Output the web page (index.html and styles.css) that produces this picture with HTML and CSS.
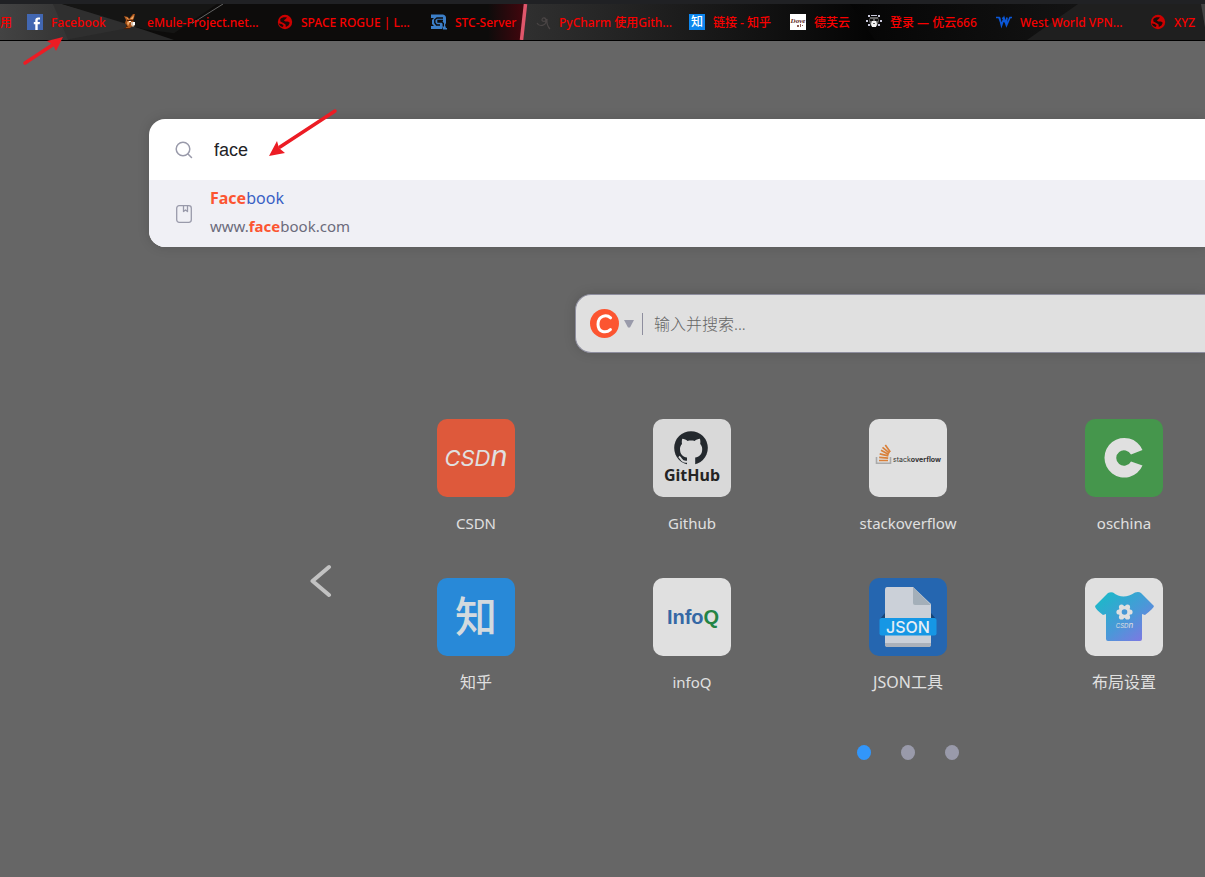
FILE: index.html
```html
<!DOCTYPE html>
<html lang="zh-CN">
<head>
<meta charset="utf-8">
<meta name="viewport" content="width=device-width, initial-scale=1">
<title>New Tab</title>
<link rel="stylesheet" href="styles.css">
</head>
<body>
<svg class="defs" aria-hidden="true">
  <symbol id="globe" viewBox="0 0 16 16">
    <circle cx="8" cy="8" r="7.200" fill="#cc0000"/>
    <path d="M3.200 5.200C5 3 8 2.800 10 3.600L8.600 5 6.800 6.400 8.400 7.600 11 7.400 12.800 8.800 11.400 11.400 8.800 13 8.600 10.600 6.400 9 3.400 7.600zM1.800 9.400l3 .6 1.800 1.600-.8 1.400-1.600-.4C3 11.800 2.200 10.800 1.800 9.400z" fill="#1a0b0a"/>
  </symbol>
</svg>

<nav class="bookmarks" aria-label="书签">
  <svg class="bookmarks-art" viewBox="0 0 1205 37" preserveAspectRatio="none" aria-hidden="true">
    <defs>
      <linearGradient id="left" x1="0" x2="1"><stop offset="0" stop-color="#434343"/><stop offset="1" stop-color="#343434"/></linearGradient>
      <linearGradient id="glow" x1="0" x2="1"><stop offset="0" stop-color="#42060d" stop-opacity="0"/><stop offset="1" stop-color="#42060d"/></linearGradient>
      <linearGradient id="mid" x1="0" x2="1"><stop offset="0" stop-color="#303030"/><stop offset="1" stop-color="#030303"/></linearGradient>
      <linearGradient id="right" x1="0" x2="1"><stop offset="0" stop-color="#050505"/><stop offset="1" stop-color="#1b1b1b"/></linearGradient>
    </defs>
    <path d="M0 0h1205v37H0z" fill="#0d0c0b"/>
    <path d="M50 0h12l80 26 32 11H50z" fill="#292929"/>
    <path d="M53 0h9l80 22-77 15z" fill="#2f2f2f"/>
    <path d="M0 0h53l15 37H0z" fill="url(#left)"/>
    <path d="M62 0h155l-43 30-30-4z" fill="#151514"/>
    <path d="m192 20 31-20" stroke="#666"/>
    <path d="M488 0h36l-4 37h-32z" fill="url(#glow)"/>
    <path d="M524 0h356v37H520z" fill="url(#mid)"/>
    <path d="M850 0h355v37H875z" fill="url(#right)"/>
    <path d="M1078 0h127v37h-178z" fill="#1f1f1f"/>
    <path d="M1201 0h4v24z" fill="#444"/>
    <path d="M525.500 0 521.500 37" stroke="#e0566b" stroke-width="3.500"/>
  </svg>
  <ul class="bookmark-list">
    <li><a class="bookmark" href="#"><span class="bookmark-name">用</span></a></li>
    <li><a class="bookmark" href="#">
      <svg class="favicon" viewBox="0 0 16 16" aria-hidden="true"><path d="M0 0h16v16H0z" fill="#4267b2"/><path d="M8.300 16V10.200H6.800V8h1.500V6.200C8.300 4.200 9.400 3.400 11.200 3.400h1.800v2.100h-1.300c-.7 0-1 .3-1 1V8h2.300l-.3 2.200h-2V16z" fill="#fff"/></svg>
      <span class="bookmark-name">Facebook</span></a></li>
    <li><a class="bookmark" href="#">
      <svg class="favicon" viewBox="0 0 16 16" aria-hidden="true"><path d="M1 2 5 3 6 5 10 0h2l-1 4-1 2 1 3-1 3-5 3H2l2-3-2-3 1-3z" fill="#a9541a"/><path d="m2 3 3 1 1 2zM7 5l4-4-1 4zM5 7l2 1-2 4-1-3z" fill="#f0a765"/><path d="M4 6h6v1H4zM1 14h6v1H1zM3 10l2 3H3z" fill="#4a2008"/><path d="M8 8h4v3l-2 2-2-2z" fill="#d8c0aa"/><path d="M10 8h2v3h-2zM6 7h2v1H6z" fill="#fff"/></svg>
      <span class="bookmark-name">eMule-Project.net...</span></a></li>
    <li><a class="bookmark" href="#"><svg class="favicon" aria-hidden="true"><use href="#globe"/></svg><span class="bookmark-name">SPACE ROGUE | L...</span></a></li>
    <li><a class="bookmark" href="#">
      <svg class="favicon" viewBox="0 0 16 16" fill="none" aria-hidden="true"><path d="M0 .5h12Q15 1 15 4v5l-1 2 1 3h1v1.500h-4l-1-3v2.500H0v-3h3L1 10V6l2-2H0z" fill="#3c7fc8"/><path d="M12 4H6L3.800 5.800v3L5.500 11H9M12 6.500H7V8h4l1.300 1.500v3" stroke="#0d0c0b" stroke-width="1.400"/></svg>
      <span class="bookmark-name">STC-Server</span></a></li>
    <li><a class="bookmark" href="#">
      <svg class="favicon" viewBox="0 0 16 16" fill="none" aria-hidden="true"><path d="M2 9c2 4 9 3 9-2 0-4-4-4-4-1 0 2 4 2 5-1 0 3-1 6 3 10" stroke="#4a4545" stroke-width="1.200"/></svg>
      <span class="bookmark-name">PyCharm 使用Gith...</span></a></li>
    <li><a class="bookmark" href="#">
      <svg class="favicon" viewBox="0 0 16 16" aria-hidden="true"><path d="M0 0h16v16H0z" fill="#0d86ed"/><text class="zhi zhi-small" x="8" y="12">知</text></svg>
      <span class="bookmark-name">链接 - 知乎</span></a></li>
    <li><a class="bookmark" href="#">
      <svg class="favicon" viewBox="0 0 16 16" aria-hidden="true"><path d="M0 0h16v16H0z" fill="#fff"/><text class="dove" x="8" y="9">Dove</text><path d="M7 11h2v2H7zM10 10h1v3h-1zM12 11h1v1h-1z" fill="#8b5a50"/></svg>
      <span class="bookmark-name">德芙云</span></a></li>
    <li><a class="bookmark" href="#">
      <svg class="favicon" viewBox="0 0 16 16" aria-hidden="true"><path d="M2 1h2v2H2zM12 1h2v2h-2zM5 1h6v1H5zM0 6h2v2H0zM14 6h2v2h-2zM2 10h2v2H2zM12 10h2v2h-2z" fill="#c9c9dc"/><path d="M4 3h8l1 4-2 5H5L3 7z" fill="#666"/><path d="M4 5h3v2H4zM9 5h3v2H9z" fill="#111"/><path d="M6 7h4l1 3-1 3H6l-1-3z" fill="#f4f4f4"/><path d="M7 9h2v1H7z" fill="#666"/></svg>
      <span class="bookmark-name">登录 — 优云666</span></a></li>
    <li><a class="bookmark" href="#">
      <svg class="favicon" viewBox="0 0 16 16" fill="none" aria-hidden="true"><path d="M0 3.500h3l2.500 7M3.500 3.500l2 8L8 4l2.500 7.500L14 3.500h2M6.500 3.500l3.500 6M11 3.500l-1 6" stroke="#0b57d8" stroke-width="1.700"/></svg>
      <span class="bookmark-name">West World VPN...</span></a></li>
    <li><a class="bookmark" href="#"><svg class="favicon" aria-hidden="true"><use href="#globe"/></svg><span class="bookmark-name">XYZ</span></a></li>
  </ul>
</nav>

<main class="page">
  <form class="finder" role="search">
    <div class="finder-row">
      <label class="row-icon" for="finder-input" aria-label="查找书签">
        <svg width="18" height="18" viewBox="0 0 18 18" fill="none" stroke="#999aaa" stroke-width="1.500" stroke-linecap="round"><circle cx="8" cy="8" r="6.800"/><path d="m13 13 3.500 3.500"/></svg>
      </label>
      <input class="finder-input" id="finder-input" type="text" value="face" autocomplete="off">
    </div>
    <a class="suggestion" href="#">
      <span class="row-icon"><svg width="18" height="20" viewBox="0 0 18 20" fill="none" stroke="#999aaa" stroke-width="1.300" stroke-linejoin="round" aria-hidden="true"><rect x="1.700" y="1.700" width="14.600" height="16.600" rx="2.500"/><path d="M8.500 2v5.500l2-1.500 2 1.500V2"/></svg></span>
      <span class="suggestion-text">
        <span class="suggestion-title"><b>Face</b>book</span>
        <span class="suggestion-url">www.<b>face</b>book.com</span>
      </span>
    </a>
  </form>

  <form class="search">
    <button class="engine" type="button" aria-label="选择搜索引擎">
      <svg width="30" height="30" viewBox="0 0 30 30" aria-hidden="true"><circle cx="14.500" cy="14.500" r="14.500" fill="#fc5531"/><path d="M20.600 8.800C16.500 5 8 6.600 8 15.200 8 23.500 16 24.500 20.400 20.600" fill="none" stroke="#fff" stroke-width="3" stroke-linecap="round"/></svg>
      <svg width="10" height="8" viewBox="0 0 10 8" aria-hidden="true"><path d="M0 0h10L6 7.500H4z" fill="#999aaa"/></svg>
    </button>
    <input class="search-input" type="text" placeholder="输入并搜索..." aria-label="输入并搜索">
  </form>

  <section class="launcher">
    <button class="prev" type="button" aria-label="上一页">
      <svg width="22" height="34" viewBox="0 0 22 34" fill="none" aria-hidden="true"><path d="M19 3 2.500 17 19 31" stroke="#c2c2c2" stroke-width="4" stroke-linecap="round" stroke-linejoin="round"/></svg>
    </button>
    <div class="launcher-body">
      <div class="tiles">
        <a class="tile" href="#">
          <svg class="logo logo-csdn" viewBox="0 0 78 78" aria-hidden="true"><text class="csdn" x="39" y="47">CSD<tspan font-size="29">n</tspan></text></svg>
          <span>CSDN</span></a>
        <a class="tile" href="#">
          <svg class="logo logo-github" viewBox="0 0 78 78" aria-hidden="true"><circle cx="38" cy="29" r="16.800" fill="#24292e"/><path d="M34 46V38.500c-4-.7-7-2.800-7-8.500 0-2 .8-3.700 2-5-.3-1.500-.3-3.400.3-5.200 2 0 3.800 1 5.200 2.100 2.200-.6 5-.6 7.200 0 1.400-1.100 3.200-2.100 5.200-2.100.6 1.800.6 3.700.3 5.200 1.200 1.300 2 3 2 5 0 5.700-3 7.800-7 8.500V46z" fill="#d9d9d9"/><path d="M35 42.500c-4 1-5.800-.3-7-2.600-.7-1.200-1.500-2-2.200-2.300" fill="none" stroke="#d9d9d9" stroke-width="2"/><text class="github" x="39" y="62">GitHub</text></svg>
          <span>Github</span></a>
        <a class="tile" href="#">
          <svg class="logo logo-plain" viewBox="0 0 78 78" fill="none" aria-hidden="true"><path d="M7.500 38v6.200h14V38" stroke="#aaa" stroke-width="1.600"/><g stroke="#d9803a" stroke-width="1.700"><path d="M10 41.500h9M10.200 38.300l9 .8M10.700 34.800l8.700 2M12 31.200l7.800 4.200M13.500 28.300l7 5.800M16.300 26l5 7"/></g><text class="stack" x="24" y="43">stack<tspan font-weight="700">overflow</tspan></text></svg>
          <span>stackoverflow</span></a>
        <a class="tile" href="#">
          <svg class="logo logo-oschina" viewBox="0 0 78 78" aria-hidden="true"><path d="M57.500 31A19.800 19.800 0 1 0 57.500 46.500L46 42.500A7.800 7.800 0 1 1 46 35.500z" fill="#e0e0e0"/></svg>
          <span>oschina</span></a>
        <a class="tile tile-cjk second-row" href="#">
          <svg class="logo logo-zhihu" viewBox="0 0 78 78" aria-hidden="true"><text class="zhi zhi-large" x="39" y="54">知</text></svg>
          <span>知乎</span></a>
        <a class="tile" href="#">
          <svg class="logo logo-plain" viewBox="0 0 78 78" aria-hidden="true"><text class="infoq" x="40" y="46">Info<tspan fill="#238444">Q</tspan></text></svg>
          <span>infoQ</span></a>
        <a class="tile tile-cjk" href="#">
          <svg class="logo logo-json" viewBox="0 0 78 78" aria-hidden="true"><path d="m16 35-5 6h56l-5-6z" fill="#174576"/><path d="M18 9h26l18 17v40q0 3-3 3H19q-3 0-3-3V12q0-3 2-3z" fill="#cbd0d8"/><path d="M44 9v16q0 2 2 2h16z" fill="#a4afb9"/><path d="M16 65h46v2q0 2-3 2H19q-3 0-3-2z" fill="#abb1ba"/><rect x="10.500" y="40" width="57" height="17.500" rx="2" fill="#1697e5"/><text class="json" x="39" y="54.500">JSON</text></svg>
          <span>JSON工具</span></a>
        <a class="tile tile-cjk" href="#">
          <svg class="logo logo-plain" viewBox="0 0 78 78" aria-hidden="true"><defs><linearGradient id="shirt" x1="0" y1="0" x2="1" y2="1"><stop offset=".15" stop-color="#22b4cb"/><stop offset=".55" stop-color="#4a98d8"/><stop offset=".9" stop-color="#7d78e2"/></linearGradient></defs><path d="M23 15q2-1 5-.5 10 8 22 0 4-1 6 .5l13 13q0 2-9 9l-3-1v25q0 2-2 2H23q-2 0-2-2V36l-3 1Q10 31 10 28z" fill="url(#shirt)"/><g fill="#e0e0e0"><circle cx="39.500" cy="34" r="6"/><circle cx="36.500" cy="29" r="2.600"/><circle cx="42.500" cy="29" r="2.600"/><circle cx="34" cy="34" r="2.600"/><circle cx="45" cy="34" r="2.600"/><circle cx="36.500" cy="39" r="2.600"/><circle cx="42.500" cy="39" r="2.600"/></g><circle cx="39.500" cy="34" r="2.800" fill="#4897d5"/><text class="shirt-text" x="39.500" y="50">CSD<tspan font-size="8">n</tspan></text></svg>
          <span>布局设置</span></a>
      </div>
      <div class="pager">
        <button class="dot is-active" type="button" aria-label="第 1 页"></button>
        <button class="dot" type="button" aria-label="第 2 页"></button>
        <button class="dot" type="button" aria-label="第 3 页"></button>
      </div>
    </div>
  </section>
</main>

<svg class="pointer pointer-bookmark" width="46" height="32" viewBox="0 0 46 32" aria-hidden="true"><path d="M4 27 33 8" stroke="#ec1c24" stroke-width="3.500" stroke-linecap="round"/><path d="M42 1 35 15 32 9 26 5z" fill="#ec1c24"/></svg>
<svg class="pointer pointer-search" width="74" height="52" viewBox="0 0 74 52" aria-hidden="true"><path d="M69 4 14 40" stroke="#ec1c24" stroke-width="3.500" stroke-linecap="round"/><path d="M3 49 11 34 13 41 19 46z" fill="#ec1c24"/></svg>
</body>
</html>
```
FILE: styles.css
```css
* { box-sizing: border-box; }

body {
  margin: 0;
  min-height: 100vh;
  overflow-x: hidden;
  background: #666;
  font-family: "Noto Sans", "Noto Sans CJK SC", sans-serif;
  font-size: 16px;
}

a { color: inherit; text-decoration: none; }
button { padding: 0; border: 0; background: none; }
.defs { position: absolute; width: 0; height: 0; }

/* Bookmark bar */
.bookmarks {
  position: relative;
  height: 41px;
  overflow: hidden;
  border-top: 4px solid #202124;
  border-bottom: 1px solid #000;
}
.bookmarks-art { position: absolute; inset: 0; width: 100%; height: 100%; }
.bookmark-list {
  position: relative;
  display: grid;
  grid-template-columns: 27px 96px 154px 154px 104px 154px 101px 76px 130px 154px auto;
  margin: 0;
  padding: 0;
  list-style: none;
}
.bookmark {
  display: flex;
  align-items: center;
  gap: 8px;
  height: 36px;
  color: #f80000;
  font-size: 12px;
  font-weight: 500;
  white-space: nowrap;
}
.favicon { flex: none; width: 16px; height: 16px; }
.zhi {
  fill: #fff;
  font-family: "Noto Sans CJK SC", sans-serif;
  text-anchor: middle;
}
.zhi-small { font-size: 12px; }
.dove { fill: #5b241b; font: italic 700 7px "Liberation Serif", serif; text-anchor: middle; }

/* Bookmark finder */
.page { padding-top: 78px; overflow: hidden; }
.finder {
  margin-left: 149px;
  overflow: hidden;
  border-radius: 16px 0 0 16px;
  background: #fff;
  box-shadow: 0 0 12px rgba(0, 0, 0, .15);
}
.finder-row { display: flex; align-items: center; height: 61px; }
.row-icon { display: flex; flex: none; justify-content: center; width: 61px; padding-left: 9px; }
.finder-input {
  flex: 1;
  min-width: 0;
  padding: 2px 4px 0;
  border: 0;
  outline: 0;
  background: none;
  color: #222226;
  font: 18px "Liberation Sans", Arial, sans-serif;
}
.suggestion { display: flex; align-items: center; height: 67px; background: #f0f0f5; }
.suggestion-text { display: flex; flex-direction: column; gap: 4px; padding-bottom: 3px; line-height: 24px; }
.suggestion-title { color: #3860c4; }
.suggestion-url { color: #6b6b7b; font-size: 15px; }
.suggestion b { color: #fc5531; }

/* Web search */
.search {
  display: flex;
  align-items: center;
  height: 59px;
  margin: 47px 0 0 575px;
  padding-left: 14px;
  border: 1px solid #8e8e9e;
  border-right: 0;
  border-radius: 16px 0 0 16px;
  background: #e0e0e0;
  box-shadow: 0 0 12px rgba(0, 0, 0, .15);
}
.engine {
  display: flex;
  align-items: center;
  gap: 4px;
  padding-right: 8px;
}
.search-input {
  flex: 1;
  min-width: 0;
  height: 22px;
  padding: 0 11px;
  border: 0;
  border-left: 1px solid #8e8e9e;
  outline: 0;
  background: none;
  font: 300 16px "Noto Sans", "Noto Sans CJK SC", sans-serif;
}
.search-input::placeholder { color: #666; }

/* Site launcher */
.launcher { display: flex; align-items: flex-start; margin: 66px 0 0 310px; }
.prev { flex: none; width: 58px; margin-top: 145px; text-align: left; }
.prev svg { display: block; }
.launcher-body { flex: none; }
.tiles {
  display: grid;
  grid-template-columns: repeat(5, 216px);
  row-gap: 44px;
}
.tile {
  display: flex;
  flex-direction: column;
  align-items: center;
  gap: 15px;
  color: #e0e0e0;
  font-size: 15px;
  line-height: 22px;
}
.tile-cjk { font-size: 16px; }
.second-row { grid-column: 1; }
.logo { width: 78px; height: 78px; border-radius: 10px; }
.logo-csdn { background: #de593b; }
.logo-github { background: #d9d9d9; }
.logo-plain { background: #e0e0e0; }
.logo-oschina { background: #45964c; }
.logo-zhihu { background: #2889d8; }
.logo-json { background: #2566b0; }
.csdn, .shirt-text {
  fill: #e0e0e0;
  font: italic 22px Inter, sans-serif;
  text-anchor: middle;
}
.shirt-text { font-size: 6px; }
.zhi-large { fill: #d3dade; font-size: 42px; font-weight: 500; }
.github { fill: #242424; font: 700 16px "Noto Sans", sans-serif; text-anchor: middle; }
.stack { fill: #333; font: 7px Inter, sans-serif; }
.infoq { fill: #3568a5; font: 700 20px "Liberation Sans", sans-serif; text-anchor: middle; }
.json { fill: #e6eef4; font: 500 16px Inter, sans-serif; text-anchor: middle; }

.pager { display: flex; justify-content: center; gap: 30px; margin-top: 52px; }
.dot { width: 14px; height: 15px; border-radius: 50%; background: #999aaa; }
.dot.is-active { background: #3296fa; }

/* Annotation arrows, laid over the page */
.pointer { position: absolute; pointer-events: none; }
.pointer-bookmark { left: 21px; top: 36px; }
.pointer-search { left: 266px; top: 107px; }
```
